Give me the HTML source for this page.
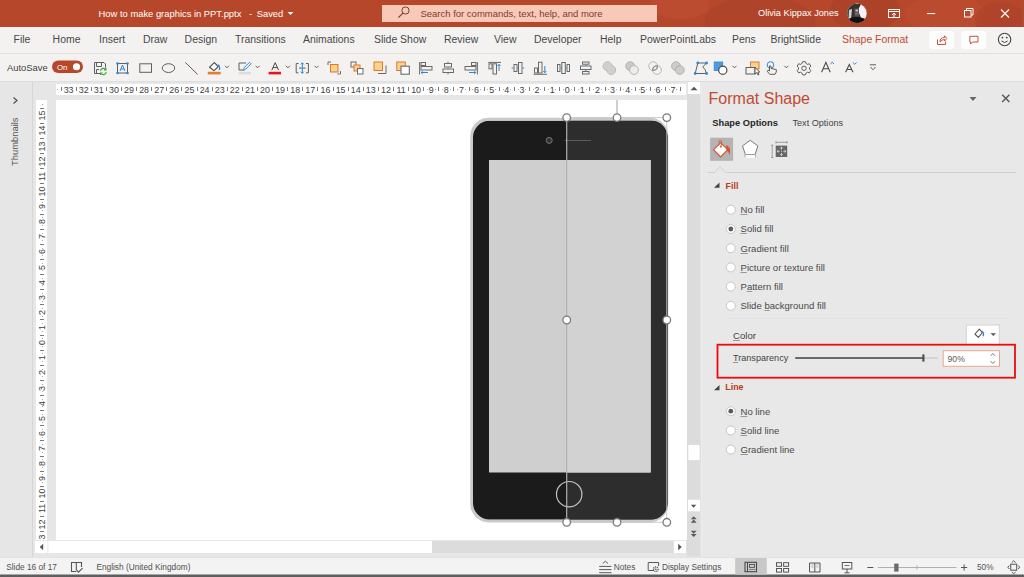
<!DOCTYPE html>
<html><head><meta charset="utf-8"><title>PowerPoint</title>
<style>
*{margin:0;padding:0;box-sizing:border-box}
html,body{width:1024px;height:577px;overflow:hidden;background:#e6e6e6;font-family:"Liberation Sans",sans-serif}
svg{position:absolute;left:0;top:0}
.t{position:absolute;white-space:nowrap;line-height:1}
.tab{position:absolute;top:35.3px;font-size:10.45px;color:#484848;white-space:nowrap;line-height:1}
.rl{position:absolute;left:740.5px;font-size:9.55px;color:#4a4a4a;white-space:nowrap;line-height:1}
u{text-decoration:underline;text-underline-offset:0.6px;text-decoration-color:#999;text-decoration-thickness:1px}
.rn{position:absolute;top:85.8px;width:20px;text-align:center;font-size:8.9px;line-height:1;color:#404040}
.rk{position:absolute;top:86.8px;width:1px;height:4px;background:#7a7a7a}
.rd{position:absolute;top:88.6px;width:1px;height:1px;background:#a8a8a8}
.vn{position:absolute;left:32px;width:20px;height:11px;text-align:center;font-size:8.9px;line-height:11px;color:#404040;transform:rotate(-90deg)}
.vk{position:absolute;left:40px;height:1px;width:4px;background:#7a7a7a}
.vd{position:absolute;left:42px;height:1px;width:1px;background:#a8a8a8}
</style></head><body>
<svg width="1024" height="577" viewBox="0 0 1024 577">
<!-- TITLE BAR -->
<rect x="0" y="0" width="1024" height="27" fill="#b7472a"/>
<ellipse cx="760" cy="22" rx="55" ry="26" fill="#a8412a" opacity="0.55"/>
<ellipse cx="680" cy="5" rx="30" ry="14" fill="#c25236" opacity="0.5"/>
<ellipse cx="865" cy="10" rx="35" ry="22" fill="#a23f27" opacity="0.5"/>
<ellipse cx="945" cy="14" rx="40" ry="20" fill="#c04f33" opacity="0.45"/>
<ellipse cx="1000" cy="20" rx="25" ry="18" fill="#a84129" opacity="0.5"/>
<rect x="1022" y="0" width="2" height="27" fill="#b24a30"/>
<polygon points="287.5,12 293.5,12 290.5,15" fill="#fff"/>
<rect x="382" y="5" width="275" height="17" fill="#f9c9b7"/>
<circle cx="405.5" cy="10.5" r="3.6" fill="none" stroke="#7d3c2c" stroke-width="1"/>
<line x1="402.9" y1="13.1" x2="398.5" y2="17.5" stroke="#7d3c2c" stroke-width="1.1"/>
<clipPath id="av"><circle cx="857" cy="13.3" r="9.7"/></clipPath>
<g clip-path="url(#av)">
<rect x="847" y="3" width="20" height="21" fill="#f4f4f4"/>
<path d="M847,8 L853,4 L861,4 L858,10 L861,18 L866,19 L866,24 L847,24 Z" fill="#333"/>
<path d="M849,10 L852,9 L851,20 L848.5,19 Z" fill="#d0d0d0"/>
<rect x="854.5" y="8.5" width="4.5" height="8" fill="#555"/>
<rect x="855.5" y="9.5" width="2.5" height="2" fill="#bbb"/>
<rect x="855.3" y="13" width="3" height="1.2" fill="#a66"/>
<path d="M848,19 Q857,15 866,19.5 V24 H848 Z" fill="#111"/>
</g>
<rect x="888.5" y="9.5" width="11" height="8" fill="none" stroke="#fff" stroke-width="1"/>
<line x1="888.5" y1="11.5" x2="899.5" y2="11.5" stroke="#fff" stroke-width="1"/>
<polyline points="892,15 894,13 896,15" fill="none" stroke="#fff" stroke-width="1"/>
<line x1="894" y1="13" x2="894" y2="17" stroke="#fff" stroke-width="1"/>
<line x1="927" y1="13.6" x2="935.2" y2="13.6" stroke="#fff" stroke-width="1"/>
<rect x="964.5" y="10.5" width="6.5" height="6.5" fill="none" stroke="#fff" stroke-width="1"/>
<polyline points="966.5,10.5 966.5,8.5 973,8.5 973,15 971,15" fill="none" stroke="#fff" stroke-width="1"/>
<line x1="1001" y1="9.5" x2="1009" y2="17.5" stroke="#fff" stroke-width="1.1"/>
<line x1="1009" y1="9.5" x2="1001" y2="17.5" stroke="#fff" stroke-width="1.1"/>

<!-- TABS ROW -->
<rect x="0" y="27" width="1024" height="26" fill="#f3f2f1"/>
<rect x="0" y="53" width="1024" height="1" fill="#e1dfdd"/>
<rect x="929.5" y="31" width="24.5" height="18" rx="2" fill="#fdfdfd"/>
<rect x="961.5" y="31" width="24.5" height="18" rx="2" fill="#fdfdfd"/>
<path d="M937.5,39.5 V44.5 H945.5 V41.5" fill="none" stroke="#c4523a" stroke-width="1"/>
<path d="M940,42 Q940,37.5 944.5,37.5 V35.8 L946.8,38.5 L944.5,41 V39.5 Q941.5,39.5 940,42Z" fill="none" stroke="#c4523a" stroke-width="1" stroke-linejoin="round"/>
<path d="M969.8,36.3 H978 V42 H972.5 L970.5,44 V42 H969.8Z" fill="none" stroke="#c4523a" stroke-width="1"/>
<circle cx="1004.6" cy="39.5" r="6.2" fill="none" stroke="#444" stroke-width="1.1"/>
<circle cx="1002.4" cy="37.6" r="0.9" fill="#444"/>
<circle cx="1006.8" cy="37.6" r="0.9" fill="#444"/>
<path d="M1001.6,41 Q1004.6,44 1007.6,41" fill="none" stroke="#444" stroke-width="1"/>

<!-- TOOLS ROW -->
<rect x="0" y="54" width="1024" height="27" fill="#f3f2f1"/>
<rect x="0" y="81" width="1024" height="1" fill="#dedede"/>
<rect x="52" y="60.5" width="31" height="12.5" rx="6.25" fill="#b7472a"/>
<circle cx="76.5" cy="66.75" r="3.6" fill="#fff"/>
<g fill="none" stroke="#5f5f5f" stroke-width="1">
<!-- save icon -->
<path d="M94.5,62.5 H104 L105.5,64 V67.5 M100,73.5 H94.5 V62.5"/>
<path d="M96.5,62.5 V66.5 H101.5 V62.5"/>
<path d="M96.5,73.5 V69.5 H99"/>
</g>
<g fill="none" stroke="#3fa645" stroke-width="1.2">
<path d="M100.5,70.8 A3,3 0 0 1 105.8,69.5"/>
<path d="M106.3,72.2 A3,3 0 0 1 101,73.5"/>
<polyline points="105.9,67.8 105.9,69.8 103.9,69.8"/>
<polyline points="100.6,75 100.6,73 102.6,73"/>
</g>
<!-- text box -->
<rect x="117.5" y="63.5" width="10" height="9.5" fill="none" stroke="#5f5f5f" stroke-width="1"/>
<g fill="#2b88d8"><circle cx="117.5" cy="63.5" r="1.3"/><circle cx="127.5" cy="63.5" r="1.3"/><circle cx="117.5" cy="73" r="1.3"/><circle cx="127.5" cy="73" r="1.3"/></g>
<path d="M120,71 L122.5,65 L125,71 M121,69 H124" fill="none" stroke="#2b88d8" stroke-width="1"/>
<!-- rect -->
<rect x="139.8" y="63.8" width="11.7" height="8.5" fill="none" stroke="#5f5f5f" stroke-width="1"/>
<!-- oval -->
<ellipse cx="168.5" cy="68.1" rx="6.2" ry="4.4" fill="none" stroke="#5f5f5f" stroke-width="1"/>
<!-- line -->
<line x1="185.3" y1="62.4" x2="197.7" y2="74.5" stroke="#5f5f5f" stroke-width="1"/>
<!-- fill bucket -->
<path d="M209.6,67.2 L214.3,62.7 L216.8,65 L218,66.8 L214,70.6 Z" fill="#fff" stroke="#4a4a4a" stroke-width="1.1" stroke-linejoin="round"/>
<path d="M217.9,64.9 Q220,66 219.5,70" fill="none" stroke="#2b88d8" stroke-width="1.3"/>
<rect x="207.8" y="71.8" width="12.9" height="2.6" fill="#ea7a2c"/>
<!-- pen outline -->
<path d="M246,63 H239 V70 H243" fill="none" stroke="#5f5f5f" stroke-width="1"/>
<path d="M243.5,70.5 L244.3,67.5 L249.5,62.3 L251,63.8 L245.8,69 Z" fill="#fff" stroke="#2b88d8" stroke-width="1"/>
<rect x="238.6" y="71.8" width="12.4" height="2.6" fill="#dcdcdc"/>
<!-- font color A -->
<path d="M271.8,70.2 L275.2,62.6 L278.6,70.2 M273,67.6 H277.4" fill="none" stroke="#4a4a4a" stroke-width="1"/>
<rect x="268.6" y="71.8" width="12.4" height="2.6" fill="#e8141b"/>
<!-- align text -->
<path d="M298.5,63.5 H296.2 V72.8 H298.5 M306,63.5 H308.4 V72.8 H306" fill="none" stroke="#5f5f5f" stroke-width="1"/>
<path d="M299,68.1 H305.6" stroke="#5f5f5f" stroke-width="1"/>
<path d="M302.3,62.8 V73.3 M300.8,64.4 L302.3,62.8 L303.8,64.4 M300.8,71.7 L302.3,73.3 L303.8,71.7" fill="none" stroke="#2b88d8" stroke-width="1"/>
<!-- chevrons -->
<g fill="none" stroke="#5f5f5f" stroke-width="1">
<polyline points="225,65.8 227,67.8 229,65.8"/>
<polyline points="255.6,65.8 257.6,67.8 259.6,65.8"/>
<polyline points="285.9,65.8 287.9,67.8 289.9,65.8"/>
<polyline points="314.5,65.8 316.5,67.8 318.5,65.8"/>
<polyline points="732.5,65.8 734.5,67.8 736.5,65.8"/>
<polyline points="784.3,65.8 786.3,67.8 788.3,65.8"/>
</g>
<!-- bring forward -->
<path d="M331,62 H328 V65 M337.5,74 H340.5 V71" fill="none" stroke="#6a6a6a" stroke-width="1"/>
<rect x="330.5" y="64.5" width="7.5" height="7.5" fill="#f8d38c" stroke="#e8742a" stroke-width="1"/>
<!-- send backward -->
<rect x="351" y="62" width="5" height="5" fill="none" stroke="#6a6a6a" stroke-width="1"/>
<rect x="354" y="65" width="6" height="6" fill="#f8d38c" stroke="#e8742a" stroke-width="1"/>
<rect x="357.5" y="68.5" width="5.5" height="5.5" fill="#fff" stroke="#6a6a6a" stroke-width="1"/>
<!-- bring to front -->
<path d="M378,73.5 H386 V65.5" fill="none" stroke="#6a6a6a" stroke-width="1"/>
<rect x="374" y="62" width="8.5" height="8.5" fill="#f8d38c" stroke="#e8742a" stroke-width="1"/>
<!-- send to back -->
<rect x="396.8" y="62" width="8.5" height="8.5" fill="#f8d38c" stroke="#e8742a" stroke-width="1"/>
<rect x="401" y="66.2" width="8.3" height="8" fill="#fff" stroke="#6a6a6a" stroke-width="1.1"/>
<!-- align left -->
<g fill="none" stroke="#6a6a6a" stroke-width="1">
<line x1="419.6" y1="62" x2="419.6" y2="74.5"/>
<rect x="421" y="62.5" width="4.5" height="3"/>
<rect x="421" y="66.5" width="11" height="3.5"/>
</g>
<path d="M428,72.5 H421 M422.8,71 L421.2,72.5 L422.8,74" fill="none" stroke="#2b88d8" stroke-width="1"/>
<!-- align center -->
<g fill="none" stroke="#6a6a6a" stroke-width="1">
<rect x="444.5" y="63.5" width="7" height="3.5"/>
<rect x="443" y="69" width="10.5" height="3.5"/>
</g>
<path d="M448,61.5 V63 M448,67.5 V68.5 M448,73 V74.5" stroke="#2b88d8" stroke-width="1"/>
<!-- align right -->
<g fill="none" stroke="#6a6a6a" stroke-width="1">
<line x1="477.4" y1="62" x2="477.4" y2="74.5"/>
<rect x="471.5" y="62.5" width="4.5" height="3"/>
<rect x="465" y="66.5" width="11" height="3.5"/>
</g>
<path d="M469,72.5 H476 M474.2,71 L475.8,72.5 L474.2,74" fill="none" stroke="#2b88d8" stroke-width="1"/>
<!-- align top -->
<g fill="none" stroke="#6a6a6a" stroke-width="1">
<line x1="488.3" y1="62.4" x2="501" y2="62.4"/>
<rect x="489" y="63.8" width="3" height="5"/>
<rect x="493" y="63.8" width="3.5" height="10.2"/>
</g>
<path d="M499,71 V64.5 M497.5,66 L499,64.3 L500.5,66" fill="none" stroke="#2b88d8" stroke-width="1"/>
<!-- align middle -->
<g fill="none" stroke="#6a6a6a" stroke-width="1">
<rect x="514" y="64.5" width="3" height="7"/>
<rect x="518.5" y="62.5" width="3.5" height="11"/>
</g>
<path d="M511.6,68 H513.5 M517.5,68 H518 M522.5,68 H524.2" stroke="#2b88d8" stroke-width="1"/>
<!-- align bottom -->
<g fill="none" stroke="#6a6a6a" stroke-width="1">
<line x1="533.6" y1="74.3" x2="547" y2="74.3"/>
<rect x="534.5" y="68" width="3" height="5"/>
<rect x="538.5" y="62.2" width="3.5" height="10.8"/>
</g>
<path d="M544.8,66 V72.5 M543.3,71 L544.8,72.7 L546.3,71" fill="none" stroke="#2b88d8" stroke-width="1"/>
<!-- distribute horiz -->
<g fill="none" stroke="#6a6a6a" stroke-width="1">
<rect x="557.5" y="64.5" width="2.5" height="7"/>
<rect x="561.8" y="62.5" width="3.5" height="11"/>
<rect x="567" y="64.5" width="2.5" height="7"/>
</g>
<path d="M560.5,68 H561.5 M565.6,68 H566.6" stroke="#2b88d8" stroke-width="1"/>
<!-- distribute vert -->
<g fill="none" stroke="#6a6a6a" stroke-width="1">
<rect x="582.5" y="62" width="6.5" height="2.2"/>
<rect x="580.5" y="66" width="10.5" height="3.5"/>
<rect x="582.5" y="71.5" width="6.5" height="2.5"/>
</g>
<path d="M585.8,64.5 V65.8 M585.8,69.8 V71" stroke="#2b88d8" stroke-width="1"/>
<!-- merge shapes (disabled gray) -->
<g stroke="#b3b3b3" stroke-width="1" fill="#cfcfcf">
<circle cx="607.5" cy="66.2" r="4.4"/><circle cx="611.3" cy="70" r="4.4"/>
</g>
<g fill="#cfcfcf"><circle cx="607.5" cy="66.2" r="3.9"/><circle cx="611.3" cy="70" r="3.9"/></g>
<circle cx="630.2" cy="66.2" r="4.4" fill="#c9c9c9" stroke="#b3b3b3" stroke-width="1"/>
<circle cx="634" cy="70" r="4.4" fill="#ececec" stroke="#b3b3b3" stroke-width="1"/>
<circle cx="653.2" cy="66.2" r="4.4" fill="none" stroke="#b8b8b8" stroke-width="1"/>
<circle cx="657" cy="70" r="4.4" fill="none" stroke="#b8b8b8" stroke-width="1"/>
<path d="M652.7,70.5 A4.4,4.4 0 0 1 657.5,65.7 A4.4,4.4 0 0 1 652.7,70.5Z" fill="none" stroke="#8e8e8e" stroke-width="1.1"/>
<circle cx="676" cy="66.2" r="4.4" fill="#cdcdcd" stroke="#b3b3b3" stroke-width="1"/>
<circle cx="679.8" cy="70" r="4.4" fill="#cdcdcd" stroke="#b3b3b3" stroke-width="1"/>
<path d="M675.5,70.5 A4.4,4.4 0 0 1 680.3,65.7" fill="none" stroke="#b3b3b3" stroke-width="1"/>
<!-- edit points -->
<path d="M695.2,73.5 L697.8,63 H706.6 L702.8,66.8 L705,69.5 L706.6,73.5 Z" fill="none" stroke="#5f5f5f" stroke-width="1"/>
<g fill="#2b88d8"><circle cx="695.2" cy="73.5" r="1.4"/><circle cx="697.8" cy="63" r="1.4"/><circle cx="706.6" cy="63" r="1.4"/><circle cx="706.6" cy="73.5" r="1.4"/></g>
<!-- change shape -->
<rect x="714.2" y="62" width="8.5" height="8.5" fill="#4b9be0" stroke="#2b88d8" stroke-width="0.8"/>
<circle cx="722.8" cy="70.3" r="4.1" fill="#fff" stroke="#4a4a4a" stroke-width="1.2"/>
<!-- selection pane -->
<rect x="750.5" y="62" width="8.5" height="7" fill="#f8d38c" stroke="#e8742a" stroke-width="1"/>
<rect x="746" y="67.5" width="9" height="6.5" fill="#f3f2f1" stroke="#5f5f5f" stroke-width="1"/>
<path d="M755,67.5 L755,74 L756.6,72.6 L758,75 L759,74.5 L757.8,72 L759.8,72 Z" fill="#fff" stroke="#4a4a4a" stroke-width="0.9"/>
<!-- hand with circle -->
<circle cx="770.5" cy="65" r="3.3" fill="none" stroke="#2b88d8" stroke-width="1"/>
<path d="M769.5,66 V71 L768,70 L767.3,71.5 L769.8,74.3 H775 L776.3,72 V69.5 L771,68.5 V66 Z" fill="#f3f2f1" stroke="#5f5f5f" stroke-width="1"/>
<!-- gear -->
<g transform="translate(804,68.3)">
<path d="M-1.4,-6.6 H1.4 L2,-4.8 L3.6,-3.9 L5.4,-4.6 L6.8,-2.2 L5.5,-0.8 V0.8 L6.8,2.2 L5.4,4.6 L3.6,3.9 L2,4.8 L1.4,6.6 H-1.4 L-2,4.8 L-3.6,3.9 L-5.4,4.6 L-6.8,2.2 L-5.5,0.8 V-0.8 L-6.8,-2.2 L-5.4,-4.6 L-3.6,-3.9 L-2,-4.8 Z" fill="none" stroke="#5f5f5f" stroke-width="1"/>
<circle r="2.2" fill="none" stroke="#5f5f5f" stroke-width="1"/>
</g>
<!-- grow font -->
<path d="M821.6,72.3 L825.9,62.4 L830.2,72.3 M823.2,68.8 H828.6" fill="none" stroke="#4a4a4a" stroke-width="1.1"/>
<polyline points="830.3,64 832.2,62.2 834,64" fill="none" stroke="#2b88d8" stroke-width="1"/>
<!-- shrink font -->
<path d="M845.6,72.3 L849.3,64.5 L853,72.3 M847,69.5 H851.6" fill="none" stroke="#4a4a4a" stroke-width="1.1"/>
<polyline points="852.8,62.5 854.7,64.3 856.6,62.5" fill="none" stroke="#2b88d8" stroke-width="1"/>
<!-- expand -->
<line x1="869.8" y1="64.8" x2="876" y2="64.8" stroke="#5f5f5f" stroke-width="1"/>
<polyline points="870.5,67 873,69.8 875.5,67" fill="none" stroke="#5f5f5f" stroke-width="1"/>
<!-- workspace bg -->
<rect x="0" y="82" width="1024" height="476" fill="#e6e6e6"/>
<rect x="32" y="82" width="1" height="476" fill="#d6d6d6"/>
<polyline points="13.5,97.5 17,100.5 13.5,103.5" fill="none" stroke="#555" stroke-width="1.3"/>
<!-- rulers -->
<rect x="56" y="84" width="630" height="11" fill="#fff"/>
<rect x="36" y="100" width="11" height="440" fill="#fff"/>
<!-- slide -->
<rect x="56" y="100" width="631" height="440" fill="#fff"/>
<!-- v scroll -->
<rect x="687" y="94" width="13.5" height="462.5" fill="#dcdcdc"/>
<rect x="688" y="82" width="12" height="12" fill="#fff"/>
<polygon points="690.5,90.3 694,86.8 697.5,90.3" fill="#555"/>
<rect x="688" y="444.6" width="12" height="16" fill="#fff" stroke="#d0d0d0" stroke-width="0.5"/>
<rect x="688" y="499.8" width="12" height="11.5" fill="#fff"/>
<polygon points="690.9,504.8 693.6,507.8 696.3,504.8" fill="#555"/>
<g fill="#5a5a5a">
<polygon points="690.8,519.3 693.7,516.2 696.6,519.3"/><polygon points="690.8,522.7 693.7,519.6 696.6,522.7"/>
<polygon points="690.8,530.7 693.7,533.8 696.6,530.7"/><polygon points="690.8,534 693.7,537.1 696.6,534"/>
</g>
<!-- h scroll -->
<rect x="35" y="541" width="652" height="12" fill="#dcdcdc"/>
<rect x="35" y="541" width="397" height="12" fill="#fff"/>
<rect x="47.5" y="541" width="0.8" height="12" fill="#e0e0e0"/>
<polygon points="43.2,543.7 39.7,547 43.2,550.3" fill="#555"/>
<rect x="673.8" y="541" width="12.3" height="12" fill="#fff"/>
<polygon points="678.2,543.7 681.7,547 678.2,550.3" fill="#555"/>

<!-- PHONE -->
<rect x="470.3" y="117.7" width="198" height="404.8" rx="18.5" fill="#c9c9c9"/>
<clipPath id="ph"><rect x="473" y="120.8" width="194.6" height="398.6" rx="16.5"/></clipPath>
<g clip-path="url(#ph)">
<rect x="473" y="120.8" width="195" height="399" fill="#1b1b1b"/>
<rect x="567" y="117" width="101" height="403" fill="#2d2d2d"/>
</g>
<rect x="489" y="160" width="161.7" height="312.5" fill="#cfcfcf"/>
<rect x="567" y="160" width="83.7" height="312.5" fill="#d2d2d2"/>
<circle cx="549.2" cy="140.4" r="3" fill="#333" stroke="#777" stroke-width="1"/>
<line x1="565" y1="140.5" x2="591" y2="140.5" stroke="#5a5a5a" stroke-width="1"/>
<circle cx="569.2" cy="494.2" r="12.7" fill="none" stroke="#c2c2c2" stroke-width="1.2"/>
<!-- selection -->
<rect x="566.7" y="117.6" width="100.1" height="404.7" fill="none" stroke="#c6c6c6" stroke-width="0.9"/>
<line x1="566.7" y1="117.5" x2="566.7" y2="522" stroke="#a6a6a6" stroke-width="0.8"/>
<line x1="617" y1="100" x2="617" y2="114" stroke="#a0a0a0" stroke-width="1"/>
<g fill="#fff" stroke="#7a7a7a" stroke-width="1.3">
<circle cx="566.7" cy="117.6" r="3.8"/>
<circle cx="617" cy="117.6" r="3.8"/>
<circle cx="666.8" cy="117.6" r="3.8"/>
<circle cx="566.7" cy="320" r="3.8"/>
<circle cx="666.8" cy="320" r="3.8"/>
<circle cx="566.7" cy="522.3" r="3.8"/>
<circle cx="617" cy="522.3" r="3.8"/>
<circle cx="666.8" cy="522.3" r="3.8"/>
</g>

<!-- PANE -->
<rect x="701" y="82" width="323" height="476" fill="#e8e8e8"/>
<rect x="701" y="82" width="1" height="476" fill="#ededed"/>
<polygon points="969.5,97 976.5,97 973,101" fill="#666"/>
<line x1="1002.2" y1="94.7" x2="1009.4" y2="101.9" stroke="#555" stroke-width="1.4"/>
<line x1="1009.4" y1="94.7" x2="1002.2" y2="101.9" stroke="#555" stroke-width="1.4"/>
<!-- icon tabs -->
<rect x="710.1" y="137.7" width="23" height="23.1" fill="#b4b4b4"/>
<g transform="translate(720.6,149.8) rotate(45)">
<rect x="-5" y="-5" width="10" height="10" fill="#fff" stroke="#d9512c" stroke-width="1.1"/>
</g>
<circle cx="720.8" cy="146.7" r="0.9" fill="#d9512c"/>
<path d="M719.8,144.5 Q718,140 720.5,140.5 Q722.5,141 721,146.5" fill="none" stroke="#d9512c" stroke-width="0.9"/>
<path d="M726.3,145 Q731.5,147 729.5,155 Q728.5,151 726.5,150 Z" fill="#d9512c"/>
<path d="M750.2,140.3 L757.9,145.9 L755,154.6 H745.4 L742.5,145.9 Z" fill="#fff" stroke="#7a7a7a" stroke-width="1"/>
<rect x="745" y="154.8" width="10.5" height="3" fill="#fafafa"/>
<line x1="745" y1="157.5" x2="745" y2="154.5" stroke="#a0a0a0" stroke-width="0.8"/>
<line x1="755.5" y1="157.5" x2="755.5" y2="154.5" stroke="#a0a0a0" stroke-width="0.8"/>
<rect x="775.7" y="145.6" width="11.5" height="11.4" fill="#666"/>
<path d="M781.5,147.2 V149.6 M781.5,153 V155.4 M777.2,151.3 H779.6 M783.4,151.3 H785.8" stroke="#e8e8e8" stroke-width="0.8"/>
<path d="M780.3,148.4 L781.5,147 L782.7,148.4 M780.3,154.2 L781.5,155.6 L782.7,154.2 M778.4,150.1 L777,151.3 L778.4,152.5 M784.6,150.1 L786,151.3 L784.6,152.5" fill="none" stroke="#e8e8e8" stroke-width="0.7"/>
<circle cx="781.5" cy="151.3" r="0.5" fill="#e8e8e8"/>
<path d="M772.2,145.2 V157.5 M771,145.2 H773.4 M771,157.5 H773.4" fill="none" stroke="#8a8a8a" stroke-width="0.8"/>
<path d="M776,142.3 H787 M776,141 V143.6 M787,141 V143.6" fill="none" stroke="#8a8a8a" stroke-width="0.8"/>
<!-- separator with notch -->
<path d="M708,172.5 H714.7 L720,166.5 L725.6,172.5 H1016" fill="none" stroke="#cfcfcf" stroke-width="1"/>
<!-- triangles -->
<polygon points="714,187.8 719.5,187.8 719.5,182.5" fill="#444"/>
<polygon points="714,390.2 719.5,390.2 719.5,384.9" fill="#444"/>
<!-- radios -->
<g fill="#fff" stroke="#c6c6c6" stroke-width="1">
<circle cx="730.8" cy="209.7" r="4.5"/>
<circle cx="730.8" cy="229" r="4.5"/>
<circle cx="730.8" cy="248.2" r="4.5"/>
<circle cx="730.8" cy="267.4" r="4.5"/>
<circle cx="730.8" cy="286.6" r="4.5"/>
<circle cx="730.8" cy="305.8" r="4.5"/>
<circle cx="730.8" cy="411.2" r="4.5"/>
<circle cx="730.8" cy="430.4" r="4.5"/>
<circle cx="730.8" cy="449.6" r="4.5"/>
</g>
<circle cx="730.8" cy="229" r="2.4" fill="#5a5a5a"/>
<circle cx="730.8" cy="411.2" r="2.4" fill="#5a5a5a"/>
<line x1="724" y1="318.5" x2="1012" y2="318.5" stroke="#e4e4e4" stroke-width="1"/>
<!-- color button -->
<rect x="966.3" y="325" width="33" height="19.5" fill="#fff" stroke="#d2d2d2" stroke-width="1"/>
<path d="M974.9,334 L979.3,329.1 L981.4,331.3 L982.2,333 L978.3,337.4 Z" fill="#fff" stroke="#555" stroke-width="1.1" stroke-linejoin="round"/>
<path d="M982.2,331.3 Q983.8,332.3 983.4,336.3" fill="none" stroke="#2b88d8" stroke-width="1.3"/>
<polygon points="990.5,333.2 996,333.2 993.25,336" fill="#555"/>
<!-- red box -->
<rect x="717.5" y="344.7" width="297.5" height="33" fill="none" stroke="#ee0a0a" stroke-width="1.8"/>
<!-- slider -->
<line x1="795.2" y1="358" x2="923" y2="358" stroke="#6a6a6a" stroke-width="2"/>
<line x1="923" y1="358" x2="937.8" y2="358" stroke="#bcbcbc" stroke-width="1"/>
<rect x="922.3" y="354.4" width="2.2" height="7.2" fill="#4f4f4f"/>
<!-- spin box -->
<rect x="943.2" y="350.7" width="56.3" height="15.6" fill="#fff" stroke="#e9a58f" stroke-width="1"/>
<polyline points="990.6,355.8 992.8,353.5 995,355.8" fill="none" stroke="#666" stroke-width="0.9"/>
<polyline points="990.6,361.2 992.8,363.5 995,361.2" fill="none" stroke="#666" stroke-width="0.9"/>

<!-- STATUS BAR -->
<rect x="0" y="557.6" width="1024" height="19.4" fill="#f3f3f3"/>
<rect x="0" y="557" width="1024" height="0.8" fill="#e2e2e2"/>
<rect x="0" y="574.5" width="1024" height="2.5" fill="#5e5e5e"/>
<!-- book icon -->
<path d="M76.3,571.5 H71.5 V562.5 H81.5 V567 M76.3,562.5 V570" fill="none" stroke="#555" stroke-width="1.1"/>
<polyline points="76.5,569.8 78.5,572.2 82.6,568.2" fill="none" stroke="#555" stroke-width="1.1"/>
<!-- notes icon -->
<g fill="none" stroke="#5a5a5a" stroke-width="1">
<polyline points="602.8,563.5 605.4,561.2 608,563.5"/>
<line x1="599.2" y1="566.4" x2="611.5" y2="566.4"/>
<line x1="599.2" y1="569.6" x2="611.5" y2="569.6"/>
<line x1="599.2" y1="572.7" x2="611.5" y2="572.7"/>
</g>
<!-- display settings icon -->
<path d="M654,570.5 H648.2 V562.5 H658.6 V566" fill="none" stroke="#5a5a5a" stroke-width="1"/>
<circle cx="655.8" cy="569.2" r="2.3" fill="none" stroke="#4a4a4a" stroke-width="1.3" stroke-dasharray="1,0.8"/>
<circle cx="655.8" cy="569.2" r="0.8" fill="#4a4a4a"/>
<!-- normal view highlight -->
<rect x="735.2" y="558" width="31.6" height="16.6" fill="#c8c8c8"/>
<rect x="745" y="562.3" width="11.5" height="9.4" fill="none" stroke="#4a4a4a" stroke-width="1.1"/>
<line x1="747.5" y1="562.5" x2="747.5" y2="571.5" stroke="#4a4a4a" stroke-width="1"/>
<rect x="749.5" y="564.5" width="5" height="3" fill="none" stroke="#4a4a4a" stroke-width="0.8"/>
<line x1="749" y1="569.5" x2="755.5" y2="569.5" stroke="#777" stroke-width="0.8"/>
<!-- slide sorter -->
<g fill="none" stroke="#555" stroke-width="1">
<rect x="776.5" y="562.7" width="5" height="3.6"/>
<rect x="783.6" y="562.7" width="5" height="3.6"/>
<rect x="776.5" y="568.5" width="5" height="3.6"/>
<rect x="783.6" y="568.5" width="5" height="3.6"/>
</g>
<!-- reading view -->
<path d="M809.5,563 H814.8 V572 H809.5 Z M814.8,563 H820 V572 H814.8" fill="none" stroke="#555" stroke-width="1"/>
<path d="M811,565 H813.5 M811,567 H813.5 M816.2,565 H818.5 M816.2,567 H818.5" stroke="#999" stroke-width="0.6"/>
<!-- slideshow -->
<rect x="842.3" y="562.5" width="9.5" height="6.5" fill="none" stroke="#555" stroke-width="1"/>
<line x1="844.5" y1="565.5" x2="849.5" y2="565.5" stroke="#555" stroke-width="0.8"/>
<path d="M847,569 V572.5 M844.5,572.8 H849.5" stroke="#555" stroke-width="1"/>
<!-- zoom -->
<line x1="867.3" y1="567.5" x2="873.3" y2="567.5" stroke="#555" stroke-width="1"/>
<line x1="877.8" y1="567.5" x2="956.5" y2="567.5" stroke="#b0b0b0" stroke-width="1"/>
<line x1="917" y1="565.5" x2="917" y2="569.5" stroke="#b0b0b0" stroke-width="1"/>
<rect x="894.2" y="563.6" width="4.3" height="8" fill="#6a6a6a"/>
<path d="M961,567.5 H967.2 M964.1,564.4 V570.6" stroke="#555" stroke-width="1"/>
<!-- fit -->
<g fill="none" stroke="#555" stroke-width="1">
<rect x="1010.7" y="564.2" width="6" height="6"/>
<polyline points="1011.8,562.5 1013.7,560.8 1015.6,562.5"/>
<polyline points="1011.8,572 1013.7,573.8 1015.6,572"/>
<polyline points="1009.3,565.5 1007.8,567.2 1009.3,569"/>
<polyline points="1018.2,565.5 1019.7,567.2 1018.2,569"/>
</g>

</svg>
<div class="rn" style="left:58.6px">33</div><div class="rk" style="left:75.6px"></div><div class="rn" style="left:73.7px">32</div><div class="rk" style="left:90.7px"></div><div class="rn" style="left:88.8px">31</div><div class="rk" style="left:105.8px"></div><div class="rn" style="left:103.9px">30</div><div class="rk" style="left:121.0px"></div><div class="rn" style="left:119.0px">29</div><div class="rk" style="left:136.1px"></div><div class="rn" style="left:134.1px">28</div><div class="rk" style="left:151.2px"></div><div class="rn" style="left:149.2px">27</div><div class="rk" style="left:166.3px"></div><div class="rn" style="left:164.3px">26</div><div class="rk" style="left:181.4px"></div><div class="rn" style="left:179.5px">25</div><div class="rk" style="left:196.5px"></div><div class="rn" style="left:194.6px">24</div><div class="rk" style="left:211.6px"></div><div class="rn" style="left:209.7px">23</div><div class="rk" style="left:226.7px"></div><div class="rn" style="left:224.8px">22</div><div class="rk" style="left:241.8px"></div><div class="rn" style="left:239.9px">21</div><div class="rk" style="left:256.9px"></div><div class="rn" style="left:255.0px">20</div><div class="rk" style="left:272.1px"></div><div class="rn" style="left:270.1px">19</div><div class="rk" style="left:287.2px"></div><div class="rn" style="left:285.2px">18</div><div class="rk" style="left:302.3px"></div><div class="rn" style="left:300.3px">17</div><div class="rk" style="left:317.4px"></div><div class="rn" style="left:315.4px">16</div><div class="rk" style="left:332.5px"></div><div class="rn" style="left:330.6px">15</div><div class="rk" style="left:347.6px"></div><div class="rn" style="left:345.7px">14</div><div class="rk" style="left:362.7px"></div><div class="rn" style="left:360.8px">13</div><div class="rk" style="left:377.8px"></div><div class="rn" style="left:375.9px">12</div><div class="rk" style="left:392.9px"></div><div class="rn" style="left:391.0px">11</div><div class="rk" style="left:408.0px"></div><div class="rn" style="left:406.1px">10</div><div class="rk" style="left:423.2px"></div><div class="rd" style="left:426.9px"></div><div class="rn" style="left:421.2px">9</div><div class="rd" style="left:434.5px"></div><div class="rk" style="left:438.3px"></div><div class="rd" style="left:442.0px"></div><div class="rn" style="left:436.3px">8</div><div class="rd" style="left:449.6px"></div><div class="rk" style="left:453.4px"></div><div class="rd" style="left:457.2px"></div><div class="rn" style="left:451.4px">7</div><div class="rd" style="left:464.7px"></div><div class="rk" style="left:468.5px"></div><div class="rd" style="left:472.3px"></div><div class="rn" style="left:466.5px">6</div><div class="rd" style="left:479.8px"></div><div class="rk" style="left:483.6px"></div><div class="rd" style="left:487.4px"></div><div class="rn" style="left:481.7px">5</div><div class="rd" style="left:494.9px"></div><div class="rk" style="left:498.7px"></div><div class="rd" style="left:502.5px"></div><div class="rn" style="left:496.8px">4</div><div class="rd" style="left:510.0px"></div><div class="rk" style="left:513.8px"></div><div class="rd" style="left:517.6px"></div><div class="rn" style="left:511.9px">3</div><div class="rd" style="left:525.1px"></div><div class="rk" style="left:528.9px"></div><div class="rd" style="left:532.7px"></div><div class="rn" style="left:527.0px">2</div><div class="rd" style="left:540.3px"></div><div class="rk" style="left:544.0px"></div><div class="rd" style="left:547.8px"></div><div class="rn" style="left:542.1px">1</div><div class="rd" style="left:555.4px"></div><div class="rk" style="left:559.1px"></div><div class="rd" style="left:562.9px"></div><div class="rn" style="left:557.2px">0</div><div class="rd" style="left:570.5px"></div><div class="rk" style="left:574.3px"></div><div class="rd" style="left:578.0px"></div><div class="rn" style="left:572.3px">1</div><div class="rd" style="left:585.6px"></div><div class="rk" style="left:589.4px"></div><div class="rd" style="left:593.1px"></div><div class="rn" style="left:587.4px">2</div><div class="rd" style="left:600.7px"></div><div class="rk" style="left:604.5px"></div><div class="rd" style="left:608.3px"></div><div class="rn" style="left:602.5px">3</div><div class="rd" style="left:615.8px"></div><div class="rk" style="left:619.6px"></div><div class="rd" style="left:623.4px"></div><div class="rn" style="left:617.6px">4</div><div class="rd" style="left:630.9px"></div><div class="rk" style="left:634.7px"></div><div class="rd" style="left:638.5px"></div><div class="rn" style="left:632.8px">5</div><div class="rd" style="left:646.0px"></div><div class="rk" style="left:649.8px"></div><div class="rd" style="left:653.6px"></div><div class="rn" style="left:647.9px">6</div><div class="rd" style="left:661.1px"></div><div class="rk" style="left:664.9px"></div><div class="rd" style="left:668.7px"></div><div class="rn" style="left:663.0px">7</div><div class="rd" style="left:676.2px"></div><div class="rk" style="left:680.0px"></div><div class="rk" style="left:60.5px"></div><div class="rd" style="left:56.7px"></div>
<div style="position:absolute;left:0;top:100px;width:60px;height:440px;overflow:hidden"><div style="position:absolute;left:0;top:-100px"><div class="vn" style="top:110.3px">15</div><div class="vk" style="top:122.9px"></div><div class="vn" style="top:125.4px">14</div><div class="vk" style="top:138.0px"></div><div class="vn" style="top:140.5px">13</div><div class="vk" style="top:153.1px"></div><div class="vn" style="top:155.7px">12</div><div class="vk" style="top:168.2px"></div><div class="vn" style="top:170.8px">11</div><div class="vk" style="top:183.3px"></div><div class="vn" style="top:185.9px">10</div><div class="vk" style="top:198.5px"></div><div class="vd" style="top:202.2px"></div><div class="vn" style="top:201.0px">9</div><div class="vd" style="top:209.8px"></div><div class="vk" style="top:213.6px"></div><div class="vd" style="top:217.4px"></div><div class="vn" style="top:216.1px">8</div><div class="vd" style="top:224.9px"></div><div class="vk" style="top:228.7px"></div><div class="vd" style="top:232.5px"></div><div class="vn" style="top:231.3px">7</div><div class="vd" style="top:240.0px"></div><div class="vk" style="top:243.8px"></div><div class="vd" style="top:247.6px"></div><div class="vn" style="top:246.4px">6</div><div class="vd" style="top:255.2px"></div><div class="vk" style="top:258.9px"></div><div class="vd" style="top:262.7px"></div><div class="vn" style="top:261.5px">5</div><div class="vd" style="top:270.3px"></div><div class="vk" style="top:274.1px"></div><div class="vd" style="top:277.8px"></div><div class="vn" style="top:276.6px">4</div><div class="vd" style="top:285.4px"></div><div class="vk" style="top:289.2px"></div><div class="vd" style="top:293.0px"></div><div class="vn" style="top:291.7px">3</div><div class="vd" style="top:300.5px"></div><div class="vk" style="top:304.3px"></div><div class="vd" style="top:308.1px"></div><div class="vn" style="top:306.9px">2</div><div class="vd" style="top:315.6px"></div><div class="vk" style="top:319.4px"></div><div class="vd" style="top:323.2px"></div><div class="vn" style="top:322.0px">1</div><div class="vd" style="top:330.8px"></div><div class="vk" style="top:334.5px"></div><div class="vd" style="top:338.3px"></div><div class="vn" style="top:337.1px">0</div><div class="vd" style="top:345.9px"></div><div class="vk" style="top:349.7px"></div><div class="vd" style="top:353.4px"></div><div class="vn" style="top:352.2px">1</div><div class="vd" style="top:361.0px"></div><div class="vk" style="top:364.8px"></div><div class="vd" style="top:368.6px"></div><div class="vn" style="top:367.3px">2</div><div class="vd" style="top:376.1px"></div><div class="vk" style="top:379.9px"></div><div class="vd" style="top:383.7px"></div><div class="vn" style="top:382.5px">3</div><div class="vd" style="top:391.2px"></div><div class="vk" style="top:395.0px"></div><div class="vd" style="top:398.8px"></div><div class="vn" style="top:397.6px">4</div><div class="vd" style="top:406.4px"></div><div class="vk" style="top:410.1px"></div><div class="vd" style="top:413.9px"></div><div class="vn" style="top:412.7px">5</div><div class="vd" style="top:421.5px"></div><div class="vk" style="top:425.3px"></div><div class="vd" style="top:429.0px"></div><div class="vn" style="top:427.8px">6</div><div class="vd" style="top:436.6px"></div><div class="vk" style="top:440.4px"></div><div class="vd" style="top:444.2px"></div><div class="vn" style="top:442.9px">7</div><div class="vd" style="top:451.7px"></div><div class="vk" style="top:455.5px"></div><div class="vd" style="top:459.3px"></div><div class="vn" style="top:458.1px">8</div><div class="vd" style="top:466.8px"></div><div class="vk" style="top:470.6px"></div><div class="vd" style="top:474.4px"></div><div class="vn" style="top:473.2px">9</div><div class="vd" style="top:482.0px"></div><div class="vk" style="top:485.7px"></div><div class="vn" style="top:488.3px">10</div><div class="vk" style="top:500.9px"></div><div class="vn" style="top:503.4px">11</div><div class="vk" style="top:516.0px"></div><div class="vn" style="top:518.5px">12</div><div class="vk" style="top:531.1px"></div><div class="vn" style="top:533.7px">13</div><div class="vk" style="top:107.7px"></div><div class="vd" style="top:104.0px"></div></div></div>
<div class="t" style="left:98.6px;top:9px;font-size:9.4px;color:#fff">How to make graphics in PPT.pptx</div>
<div class="t" style="left:249px;top:9px;font-size:9.4px;color:#fff">-</div>
<div class="t" style="left:256.7px;top:9px;font-size:9.4px;color:#fff">Saved</div>
<div class="t" style="left:420.4px;top:9px;font-size:9.5px;color:#7d3c2c">Search for commands, text, help, and more</div>
<div class="t" style="left:758px;top:9px;font-size:9.2px;color:#fff">Olivia Kippax Jones</div>

<div class="tab" style="left:13.5px">File</div>
<div class="tab" style="left:52.6px">Home</div>
<div class="tab" style="left:99px">Insert</div>
<div class="tab" style="left:143px">Draw</div>
<div class="tab" style="left:184.6px">Design</div>
<div class="tab" style="left:235px">Transitions</div>
<div class="tab" style="left:303px">Animations</div>
<div class="tab" style="left:374px">Slide Show</div>
<div class="tab" style="left:444px">Review</div>
<div class="tab" style="left:494px">View</div>
<div class="tab" style="left:534px">Developer</div>
<div class="tab" style="left:600px">Help</div>
<div class="tab" style="left:640px">PowerPointLabs</div>
<div class="tab" style="left:732px">Pens</div>
<div class="tab" style="left:770.5px">BrightSlide</div>
<div class="tab" style="left:842px;color:#c24a30">Shape Format</div>

<div class="t" style="left:7px;top:63px;font-size:9.4px;color:#444">AutoSave</div>
<div class="t" style="left:57px;top:63.5px;font-size:7.8px;color:#fff">On</div>

<div class="t" style="left:9px;top:137px;font-size:9.4px;color:#555;transform:rotate(-90deg);transform-origin:center;width:50px;margin-left:-19px;text-align:center">Thumbnails</div>

<div class="t" style="left:708.6px;top:90.5px;font-size:16px;color:#c24a30">Format Shape</div>
<div class="t" style="left:712.3px;top:118.5px;font-size:9.3px;color:#262626;font-weight:bold">Shape Options</div>
<div class="t" style="left:792.5px;top:118.5px;font-size:9.1px;color:#444">Text Options</div>
<div class="t" style="left:725.6px;top:181.5px;font-size:8.9px;color:#b83c20;font-weight:bold">Fill</div>
<div class="t" style="left:725.3px;top:383px;font-size:8.9px;color:#b83c20;font-weight:bold">Line</div>

<div class="rl" style="top:205px"><u>N</u>o fill</div>
<div class="rl" style="top:224.3px"><u>S</u>olid fill</div>
<div class="rl" style="top:243.5px"><u>G</u>radient fill</div>
<div class="rl" style="top:262.7px"><u>P</u>icture or texture fill</div>
<div class="rl" style="top:281.9px">P<u>a</u>ttern fill</div>
<div class="rl" style="top:301.1px">Slide <u>b</u>ackground fill</div>
<div class="rl" style="top:406.5px"><u>N</u>o line</div>
<div class="rl" style="top:425.7px"><u>S</u>olid line</div>
<div class="rl" style="top:444.9px"><u>G</u>radient line</div>
<div class="t" style="left:733px;top:331px;font-size:9.6px;color:#444"><u>C</u>olor</div>
<div class="t" style="left:733px;top:354px;font-size:9.1px;color:#444"><u>T</u>ransparency</div>
<div class="t" style="left:947.6px;top:355px;font-size:8.6px;color:#5a5a5a">90%</div>

<div class="t" style="left:6.2px;top:563px;font-size:8.3px;color:#505050">Slide 16 of 17</div>
<div class="t" style="left:96.4px;top:563px;font-size:8.3px;color:#505050">English (United Kingdom)</div>
<div class="t" style="left:613.7px;top:563px;font-size:8.3px;color:#505050">Notes</div>
<div class="t" style="left:661.9px;top:563px;font-size:8.3px;color:#505050">Display Settings</div>
<div class="t" style="left:977px;top:563px;font-size:8.3px;color:#555">50%</div>

</body></html>
